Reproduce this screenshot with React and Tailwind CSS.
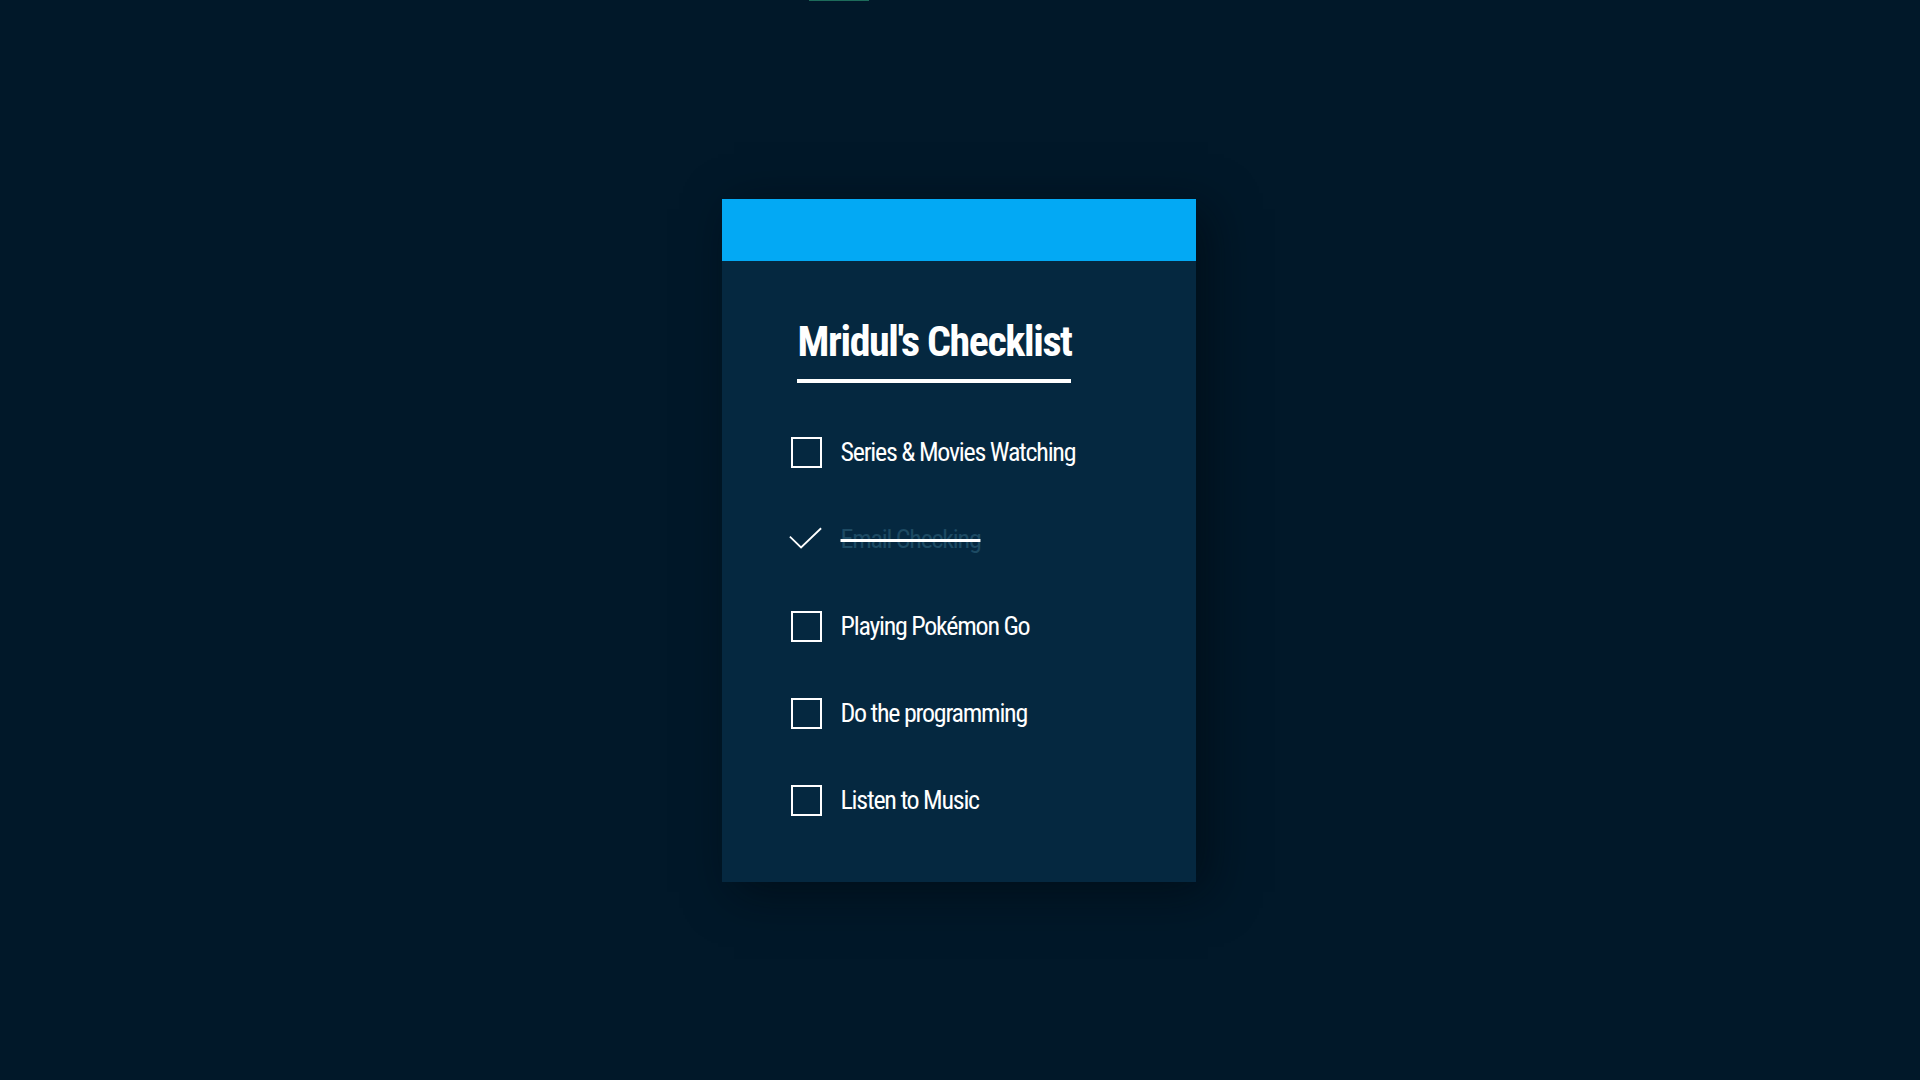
const TASKS = [
  { label: "Series & Movies Watching", done: false },
  { label: "Email Checking", done: true },
  { label: "Playing Pokémon Go", done: false },
  { label: "Do the programming", done: false },
  { label: "Listen to Music", done: false },
];

const font = {
  fontFamily: 'Roboto, "Liberation Sans", sans-serif',
};

function CheckMark() {
  return (
    <svg width="37" height="25" viewBox="0 0 37 25" fill="none" className="-ml-[2px] -mt-[2px]">
      <polyline
        points="1,10.5 13.5,22.5 36,1"
        stroke="white"
        strokeWidth="2"
        strokeLinejoin="miter"
      />
    </svg>
  );
}

export default function App() {
  return (
    <div className="min-h-screen w-full bg-[#011829] flex flex-col font-stretch-[75%]" style={font}>
      {/* top loading line */}
      <div className="h-px w-[60px] bg-[#1d6b5a] ml-[809px]" />

      <div className="flex justify-center pt-[198px] pr-[3px]">
        <div className="w-[474px] bg-[#052840] shadow-[12px_10px_45px_rgba(0,8,12,0.55)]">
          {/* header bar */}
          <div className="h-[62px] bg-[#03a9f4]" />

          <div className="pl-[69px] pt-[57px] pb-[66px]">
            {/* Title */}
            <div className="ml-[7px] inline-flex flex-col">
              <h1 className="text-[42px] leading-[48px] font-bold text-white tracking-[-1.4px]">
                Mridul's Checklist
              </h1>
              <div className="h-[4px] bg-white mt-[13px] -ml-[1px] mr-[1px]" />
            </div>

            {/* Items */}
            <ul className="mt-[54px] flex flex-col gap-[56px]">
              {TASKS.map((task) => (
                <li key={task.label} className="h-[31px] flex items-center gap-[19px]">
                  {task.done ? (
                    <div className="w-[31px] h-[31px] flex items-center">
                      <CheckMark />
                    </div>
                  ) : (
                    <div className="w-[31px] h-[31px] border-2 border-white" />
                  )}
                  {task.done ? (
                    <span className="text-[26px] tracking-[-1.25px] text-[#1d4a63] line-through decoration-white decoration-[3px]">
                      {task.label}
                    </span>
                  ) : (
                    <span className="text-[26px] tracking-[-1.25px] text-white">{task.label}</span>
                  )}
                </li>
              ))}
            </ul>
          </div>
        </div>
      </div>
    </div>
  );
}
